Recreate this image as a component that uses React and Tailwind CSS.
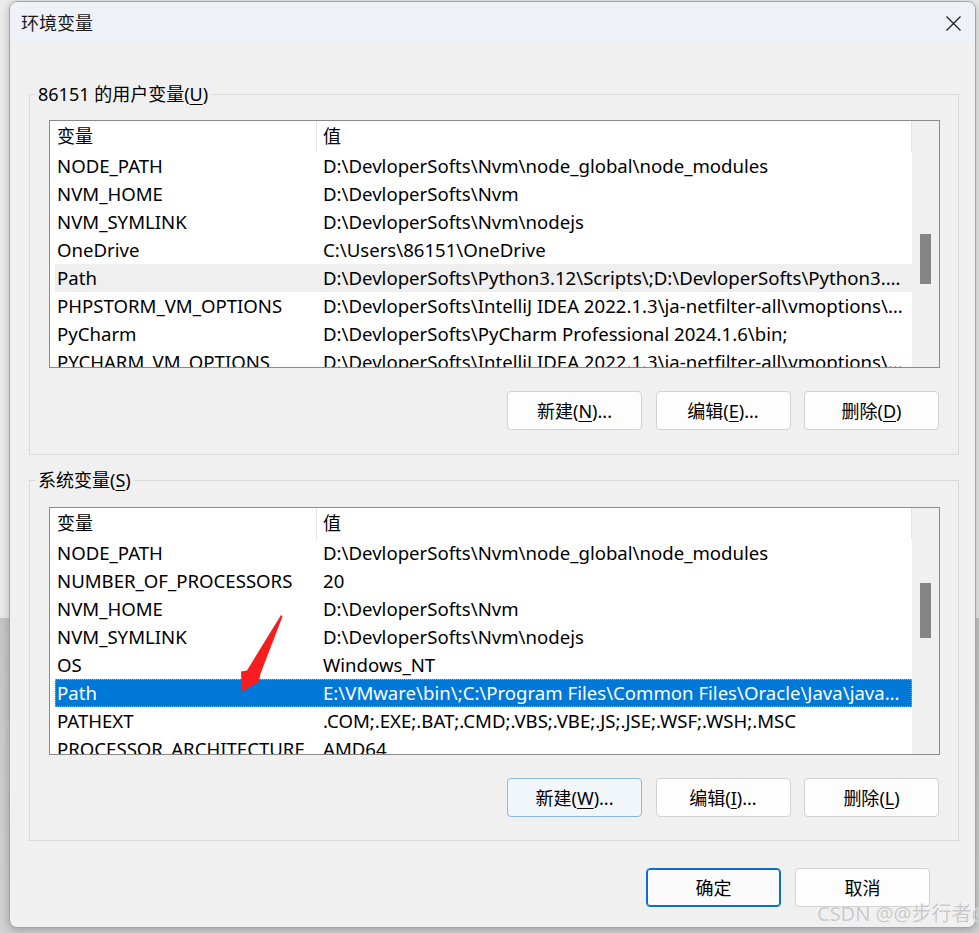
const userVars = [
  ["NODE_PATH", "D:\\DevloperSofts\\Nvm\\node_global\\node_modules"],
  ["NVM_HOME", "D:\\DevloperSofts\\Nvm"],
  ["NVM_SYMLINK", "D:\\DevloperSofts\\Nvm\\nodejs"],
  ["OneDrive", "C:\\Users\\86151\\OneDrive"],
  ["Path", "D:\\DevloperSofts\\Python3.12\\Scripts\\;D:\\DevloperSofts\\Python3.12\\;C:\\Users\\86151\\AppData\\Local"],
  ["PHPSTORM_VM_OPTIONS", "D:\\DevloperSofts\\IntelliJ IDEA 2022.1.3\\ja-netfilter-all\\vmoptions\\phpstorm.vmoptions"],
  ["PyCharm", "D:\\DevloperSofts\\PyCharm Professional 2024.1.6\\bin;"],
  ["PYCHARM_VM_OPTIONS", "D:\\DevloperSofts\\IntelliJ IDEA 2022.1.3\\ja-netfilter-all\\vmoptions\\pycharm.vmoptions"],
];

const systemVars = [
  ["NODE_PATH", "D:\\DevloperSofts\\Nvm\\node_global\\node_modules"],
  ["NUMBER_OF_PROCESSORS", "20"],
  ["NVM_HOME", "D:\\DevloperSofts\\Nvm"],
  ["NVM_SYMLINK", "D:\\DevloperSofts\\Nvm\\nodejs"],
  ["OS", "Windows_NT"],
  ["Path", "E:\\VMware\\bin\\;C:\\Program Files\\Common Files\\Oracle\\Java\\javapath;C:\\Windows\\system32"],
  ["PATHEXT", ".COM;.EXE;.BAT;.CMD;.VBS;.VBE;.JS;.JSE;.WSF;.WSH;.MSC"],
  ["PROCESSOR_ARCHITECTURE", "AMD64"],
];

function Btn({ label, keyChar, suffix = "", variant }) {
  const look =
    variant === "hover"
      ? "border-[#8fb6dc] bg-[#f1f6fb]"
      : variant === "default"
        ? "border-[#0b6fc7] bg-[#fbfbfb] shadow-[inset_0_0_0_1px_#0b6fc7]"
        : "border-[#d2d2d2] bg-[#fdfdfd]";
  return (
    <div
      className={`flex h-[39px] w-[135px] items-center justify-center rounded-[4px] border text-[18px] leading-none text-black ${look}`}
    >
      {label}
      {keyChar && (
        <>
          (<span className="underline underline-offset-[3px]">{keyChar}</span>)
        </>
      )}
      {suffix}
    </div>
  );
}

function VarList({ rows, hoverRow, selectedRow, thumbTop, thumbHeight }) {
  return (
    <div className="flex h-[248px] w-[891px] overflow-hidden border border-[#8a8a8a] bg-white">
      <div className="w-[862px] overflow-hidden">
        <div className="ml-[5px] flex h-[31px] w-[857px] items-center text-[18px]">
          <div className="flex h-full w-[262px] items-center border-r border-[#e3e3e3] pl-[2px]">变量</div>
          <div className="flex h-full flex-1 items-center border-r border-[#e3e3e3] pl-[6px]">值</div>
        </div>
        {rows.map(([name, value], i) => {
          const selected = i === selectedRow;
          const hovered = i === hoverRow;
          return (
            <div
              key={name}
              className={`ml-[5px] flex h-[28px] w-[857px] items-center text-[18.6px] ${
                selected
                  ? "bg-[#0078d7] text-white outline-1 outline-dotted outline-[#e39b52] -outline-offset-1"
                  : hovered
                    ? "bg-[#efefef] text-black"
                    : "text-black"
              }`}
            >
              <div className="w-[261px] shrink-0 whitespace-nowrap pl-[2px]">{name}</div>
              <div className="min-w-0 flex-1 overflow-hidden text-ellipsis whitespace-nowrap pl-[7px] pr-[4px]">
                {value}
              </div>
            </div>
          );
        })}
      </div>
      <div className="w-[27px] shrink-0 bg-[#f0f0f0]">
        <div style={{ marginTop: thumbTop, height: thumbHeight }} className="ml-[8px] w-[11px] bg-[#858585]" />
      </div>
    </div>
  );
}

function Group({ title, keyChar, children, className }) {
  return (
    <fieldset className={`w-[930px] border border-[#dadada] pl-[19px] pr-[18px] ${className}`}>
      <legend className="ml-[-14px] px-[3px] text-[18px] leading-[24px] text-black">
        {title}(<span className="underline underline-offset-[3px]">{keyChar}</span>)
      </legend>
      {children}
    </fieldset>
  );
}

export default function App() {
  return (
    <div className="relative h-[933px] w-[979px] overflow-hidden bg-[linear-gradient(180deg,#ececec_0,#ececec_618px,#c6c6c6_618px,#d2d2d2_100%)] font-['Noto_Sans','Noto_Sans_CJK_SC',sans-serif]">
      <div className="ml-[9px] mt-[1px] flex h-[927px] w-[967px] flex-col overflow-hidden rounded-[8px] border border-[#a3a3a3] bg-[#f0f0f0] shadow-[0_2px_10px_rgba(0,0,0,0.25)]">
        <div className="flex h-[42px] shrink-0 items-center justify-between bg-[#eef2f6] pl-[11px] pr-[14px]">
          <span className="text-[18px] text-[#1a1a1a]">环境变量</span>
          <svg width="15" height="15" viewBox="0 0 15 15">
            <path d="M0.5 0.5 L14.5 14.5 M14.5 0.5 L0.5 14.5" stroke="#1a1a1a" strokeWidth="1.2" />
          </svg>
        </div>

        <div className="pl-[19px] pt-[38px]">
          <Group title="86151 的用户变量" keyChar="U" className="pb-[24px]">
            <div className="mt-[14px]">
              <VarList rows={userVars} hoverRow={4} thumbTop={113} thumbHeight={50} />
            </div>
            <div className="mr-[1px] mt-[23px] flex justify-end gap-[13.5px]">
              <Btn label="新建" keyChar="N" suffix="..." />
              <Btn label="编辑" keyChar="E" suffix="..." />
              <Btn label="删除" keyChar="D" />
            </div>
          </Group>

          <Group title="系统变量" keyChar="S" className="mt-[13px] pb-[23px]">
            <div className="mt-[15px]">
              <VarList rows={systemVars} selectedRow={5} thumbTop={75} thumbHeight={55} />
            </div>
            <div className="mr-[1px] mt-[23px] flex justify-end gap-[13.5px]">
              <Btn label="新建" keyChar="W" suffix="..." variant="hover" />
              <Btn label="编辑" keyChar="I" suffix="..." />
              <Btn label="删除" keyChar="L" />
            </div>
          </Group>

          <div className="mr-[45px] mt-[27px] flex justify-end gap-[14px]">
            <Btn label="确定" variant="default" />
            <Btn label="取消" />
          </div>
        </div>
      </div>

      {/* red annotation arrow */}
      <svg className="absolute left-[235px] top-[610px]" width="52" height="90" viewBox="0 0 52 90">
        <polygon points="46,5 47.5,6.5 25,65 24.5,71 6.7,82 6,61.5 12,60.5" fill="#f51d1d" />
      </svg>

      <div className="absolute left-[817px] top-[899px] whitespace-nowrap text-[20px] text-[#c9c9c9] [text-shadow:0_0_1px_#ffffff]">
        CSDN @@步行者@
      </div>
    </div>
  );
}
